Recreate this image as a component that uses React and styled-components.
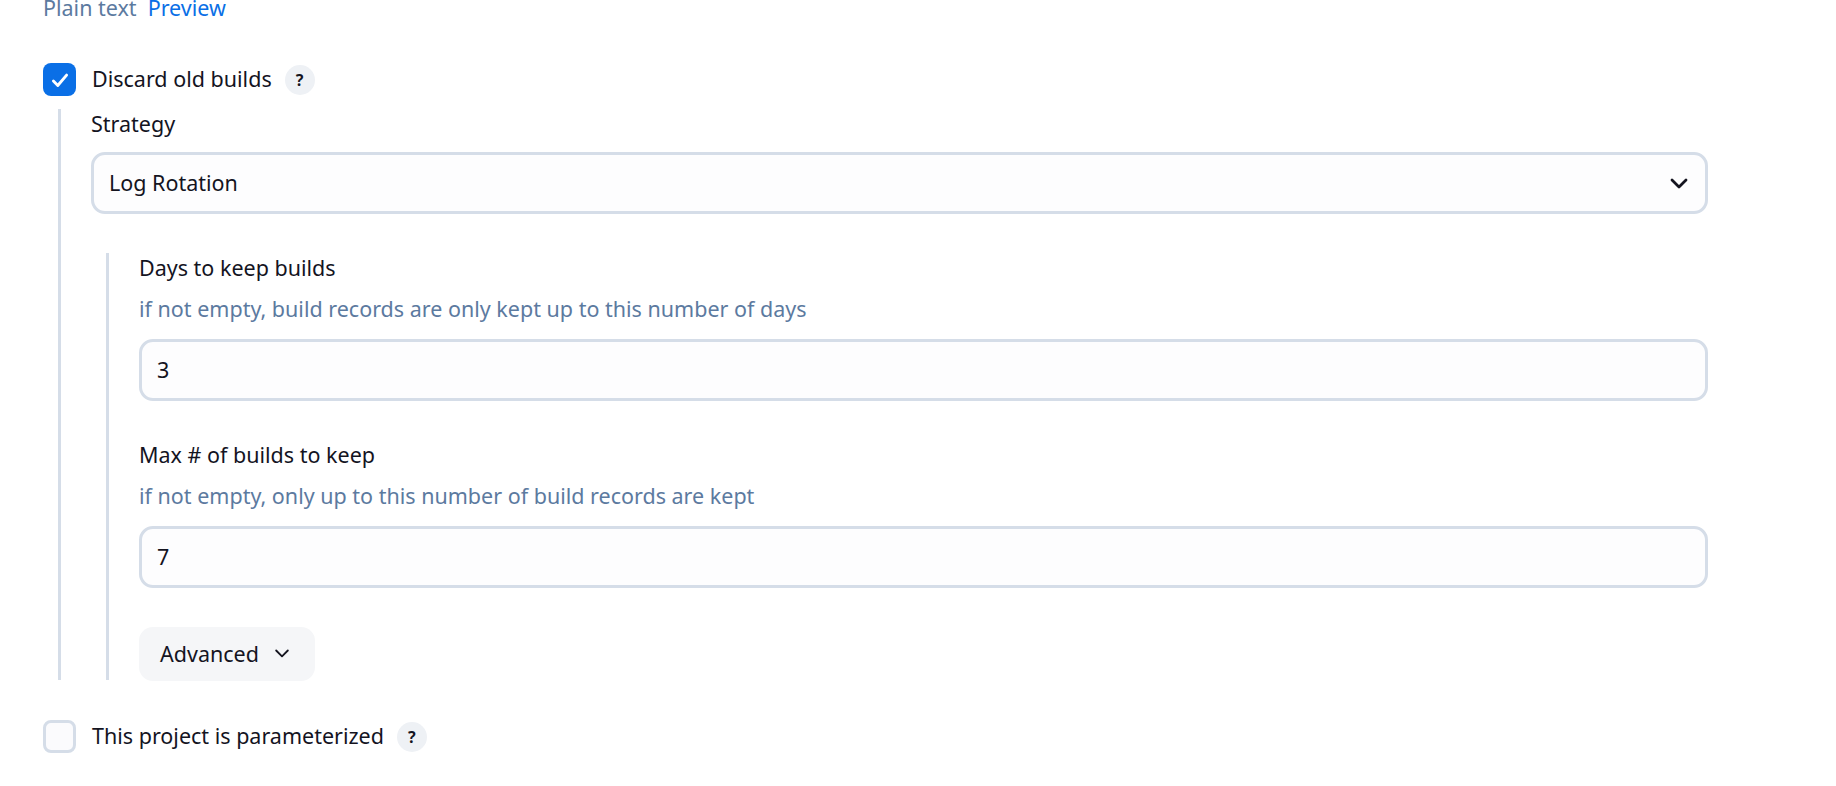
import React from "react";
import styled, { createGlobalStyle } from "styled-components";

const GlobalStyle = createGlobalStyle`
  html, body {
    margin: 0;
    background: #fff;
    overflow: hidden;
  }
  body {
    font-family: "Noto Sans", Inter, "Liberation Sans", sans-serif;
    font-size: 21.5px;
    color: #14141f;
  }
`;

const Page = styled.div`
  width: 1708px;
  height: 786px;
  padding-left: 43px;
  box-sizing: border-box;
  overflow: hidden;
`;

const FormatLinks = styled.div`
  display: flex;
  gap: 11px;
  height: 63px;
  line-height: 15px;
`;

const FormatLink = styled.span`
  color: ${(props) => (props.$active ? "#0a6fe6" : "#5c7a9f")};
`;

const CheckRow = styled.div`
  display: flex;
  align-items: center;
  height: 33px;
`;

const Box = styled.div`
  width: 33px;
  height: 33px;
  box-sizing: border-box;
  border-radius: 8px;
  display: flex;
  align-items: center;
  justify-content: center;
  background: ${(props) => (props.$checked ? "#0a6fe6" : "#fbfbfd")};
  border: ${(props) => (props.$checked ? "none" : "3px solid #d5dde8")};
`;

const CheckLabel = styled.span`
  margin-left: 16px;
  line-height: 31px;
  padding-bottom: 2px;
`;

const Help = styled.span`
  width: 30px;
  height: 30px;
  margin-left: 13px;
  border-radius: 50%;
  background: #eef1f5;
  display: flex;
  align-items: center;
  justify-content: center;
  font-size: 16px;
  font-weight: 700;
`;

const Nested = styled.div`
  margin: 13px 0 0 15px;
  padding-left: 30px;
  border-left: 3px solid #d5dde8;
  height: 571px;
  box-sizing: border-box;
`;

const Label = styled.div`
  line-height: 30px;
  height: 30px;
`;

const Hint = styled.div`
  color: #5c7a9f;
  line-height: 30px;
  height: 30px;
  margin-top: 11px;
  margin-bottom: 15px;
`;

const Field = styled.div`
  height: 62px;
  box-sizing: border-box;
  border: 3px solid #d5dde8;
  border-radius: 14px;
  background: #fdfdfe;
  padding: 0 15px 2px;
  display: flex;
  align-items: center;
  justify-content: space-between;
  color: #14141f;
`;

const SelectArrow = styled.span`
  display: flex;
  margin: 2px -1px 0 0;
`;

const StrategyLabel = styled(Label)`
  margin-bottom: 13px;
`;

const Rotation = styled.div`
  margin: 39px 0 0 15px;
  padding-left: 30px;
  border-left: 3px solid #d5dde8;
  height: 427px;
  box-sizing: border-box;
`;

const Group = styled.div`
  margin-bottom: ${(props) => props.$gap || 0}px;
`;

const AdvancedButton = styled.button`
  display: flex;
  align-items: center;
  gap: 13px;
  height: 54px;
  width: 176px;
  padding: 0 21px 2px;
  box-sizing: border-box;
  border: none;
  border-radius: 14px;
  background: #f5f6f8;
  font: inherit;
  color: #14141f;
`;

const BottomRow = styled(CheckRow)`
  margin-top: 40px;
`;

const Chevron = ({ size, width }) => (
  <svg width={size} height={size} viewBox="0 0 24 24" fill="none" stroke="#14141f" strokeWidth={width} strokeLinecap="round" strokeLinejoin="round">
    <path d="M5 9l7 7 7-7" />
  </svg>
);

const Tick = () => (
  <svg width="22" height="22" viewBox="0 0 20 20" fill="none" stroke="#fff" strokeWidth="2.6" strokeLinecap="round" strokeLinejoin="round">
    <path d="M4 11l4 4 8-9.5" />
  </svg>
);

const App = () => (
  <Page>
    <GlobalStyle />
    <FormatLinks>
      <FormatLink>Plain text</FormatLink>
      <FormatLink $active>Preview</FormatLink>
    </FormatLinks>
    <CheckRow>
      <Box $checked>
        <Tick />
      </Box>
      <CheckLabel>Discard old builds</CheckLabel>
      <Help>?</Help>
    </CheckRow>
    <Nested>
      <StrategyLabel>Strategy</StrategyLabel>
      <Field>
        Log Rotation
        <SelectArrow>
          <Chevron size={24} width={2.8} />
        </SelectArrow>
      </Field>
      <Rotation>
        <Group $gap={39}>
          <Label>Days to keep builds</Label>
          <Hint>if not empty, build records are only kept up to this number of days</Hint>
          <Field>3</Field>
        </Group>
        <Group $gap={39}>
          <Label>Max # of builds to keep</Label>
          <Hint>if not empty, only up to this number of build records are kept</Hint>
          <Field>7</Field>
        </Group>
        <AdvancedButton>
          Advanced
          <Chevron size={20} width={2.2} />
        </AdvancedButton>
      </Rotation>
    </Nested>
    <BottomRow>
      <Box />
      <CheckLabel>This project is parameterized</CheckLabel>
      <Help>?</Help>
    </BottomRow>
  </Page>
);

export default App;
